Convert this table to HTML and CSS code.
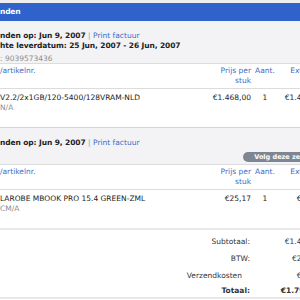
FILE: index.html
```html
<!DOCTYPE html>
<html lang="nl">
<head>
<meta charset="utf-8">
<title>Bestelling</title>
<link rel="stylesheet" href="styles.css">
</head>
<body>
<div class="page">
  <section class="shipment">
    <div class="ship-title">nden</div>
    <div class="ship-info">
      <p class="ship-line">nden op: Jun 9, 2007 <span class="sep">|</span> <a class="link" href="#">Print factuur</a></p>
      <p class="ship-line">hte leverdatum: 25 Jun, 2007 - 26 Jun, 2007</p>
      <p class="track">: 9039573436</p>
    </div>
    <div class="items">
      <div class="row head">
        <div class="c-desc"><a class="link" href="#">/artikelnr.</a></div>
        <div class="c-price"><a class="link" href="#">Prijs per<br>stuk</a></div>
        <div class="c-qty"><a class="link" href="#">Aant.</a></div>
        <div class="c-ext"><a class="link" href="#">Ext. prijs</a></div>
      </div>
      <div class="row item">
        <div class="c-desc">V2.2/2x1GB/120-5400/128VRAM-NLD<span class="sub">N/A</span></div>
        <div class="c-price">€1.468,00</div>
        <div class="c-qty">1</div>
        <div class="c-ext">€1.468,00</div>
      </div>
    </div>
  </section>

  <section class="shipment">
    <div class="ship-info second">
      <p class="ship-line">nden op: Jun 9, 2007 <span class="sep">|</span> <a class="link" href="#">Print factuur</a></p>
      <div class="track-row"><a class="pill" href="#">Volg deze zending</a></div>
    </div>
    <div class="items">
      <div class="row head">
        <div class="c-desc"><a class="link" href="#">/artikelnr.</a></div>
        <div class="c-price"><a class="link" href="#">Prijs per<br>stuk</a></div>
        <div class="c-qty"><a class="link" href="#">Aant.</a></div>
        <div class="c-ext"><a class="link" href="#">Ext. prijs</a></div>
      </div>
      <div class="row item">
        <div class="c-desc">LAROBE MBOOK PRO 15.4 GREEN-ZML<span class="sub">CM/A</span></div>
        <div class="c-price">€25,17</div>
        <div class="c-qty">1</div>
        <div class="c-ext">€25,17</div>
      </div>
    </div>
  </section>

  <div class="totals">
    <div class="t-row"><span class="t-label">Subtotaal:</span><span class="t-val">€1.493,17</span></div>
    <div class="t-row"><span class="t-label">BTW:</span><span class="t-val">€283,70</span></div>
    <div class="t-row"><span class="t-label short">Verzendkosten</span><span class="t-val">€14,95</span></div>
    <div class="t-row total"><span class="t-label">Totaal:</span><span class="t-val">€1.791,82</span></div>
  </div>
</div>
</body>
</html>
```

FILE: styles.css
```css
html, body {
  margin: 0;
  padding: 0;
  background: #ffffff;
}
body {
  font-family: "DejaVu Sans", "Liberation Sans", sans-serif;
  font-size: 7.5px;
  color: #222;
  overflow: hidden;
}
p { margin: 0; }
.page {
  width: 323px;
  border-top: 3px solid #eeeeee;
}
.link {
  color: #3d6bc6;
  text-decoration: none;
}
.ship-title {
  background: #2f63cb;
  color: #fff;
  font-weight: bold;
  font-size: 7.5px;
  letter-spacing: -0.2px;
  height: 18px;
  line-height: 18px;
}
.ship-info {
  background: #f3f3f6;
  padding-top: 10px;
  border-bottom: 1px solid #dcdcdc;
}
.ship-line {
  font-weight: bold;
  line-height: 10px;
  letter-spacing: -0.1px;
  color: #222;
}
.ship-line .sep {
  color: #999;
  font-weight: normal;
}
.ship-line .link {
  font-weight: normal;
  letter-spacing: 0;
}
.track {
  color: #8d8d8d;
  line-height: 9px;
  margin-top: 3px;
}
.ship-info.second {
  padding-top: 10px;
  padding-bottom: 2px;
  border-top: 1px solid #d4d4d4;
}
.track-row {
  display: flex;
  justify-content: flex-end;
  margin-top: 4px;
}
.pill {
  background: #7d8692;
  color: #fff;
  font-weight: bold;
  font-size: 6.5px;
  height: 10px;
  line-height: 10px;
  border-radius: 5px;
  padding: 0 2px 0 11px;
  text-decoration: none;
}
.row {
  display: grid;
  grid-template-columns: 1fr 60px 28px 44px;
}
.row.head {
  padding: 2px 0;
  line-height: 10px;
  border-bottom: 1px solid #dcdcdc;
}
.row.item {
  padding: 4px 0 14px;
  line-height: 10px;
}
.c-price { text-align: right; }
.c-qty { text-align: center; }
.c-ext { text-align: right; }
.sub {
  display: block;
  color: #8d8d8d;
}
.totals {
  border-top: 2px solid #e8e8e8;
  border-bottom: 2px solid #e8e8e8;
  padding-top: 3px;
}
.t-row {
  display: flex;
  justify-content: flex-end;
  line-height: 17px;
  color: #333;
}
.t-row.total { font-weight: bold; line-height: 13px; }
.t-label { text-align: right; }
.t-label.short { padding-right: 8px; }
.t-val {
  width: 73px;
  text-align: right;
}
```
